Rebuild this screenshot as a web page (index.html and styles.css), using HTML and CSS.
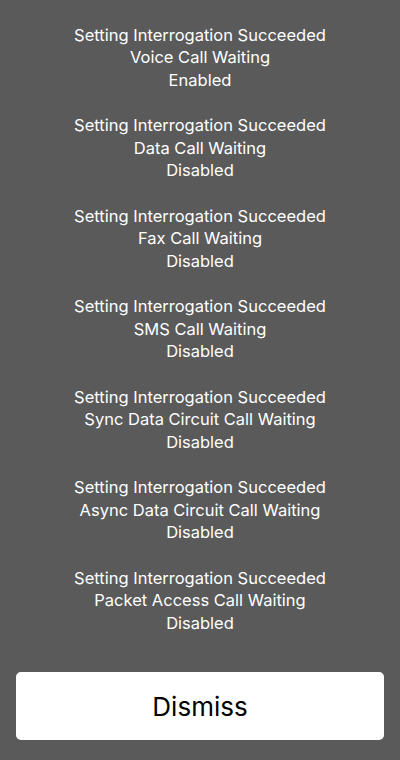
FILE: index.html
```html
<!DOCTYPE html>
<html lang="en">
<head>
    <meta charset="UTF-8">
    <meta name="viewport" content="width=device-width, initial-scale=1.0">
    <title>Call Waiting</title>
    <link rel="stylesheet" href="styles.css">
</head>
<body>
    <div class="screen">
        <div class="results">
            <p class="result">Setting Interrogation Succeeded<br>Voice Call Waiting<br>Enabled</p>
            <p class="result">Setting Interrogation Succeeded<br>Data Call Waiting<br>Disabled</p>
            <p class="result">Setting Interrogation Succeeded<br>Fax Call Waiting<br>Disabled</p>
            <p class="result">Setting Interrogation Succeeded<br>SMS Call Waiting<br>Disabled</p>
            <p class="result">Setting Interrogation Succeeded<br>Sync Data Circuit Call Waiting<br>Disabled</p>
            <p class="result">Setting Interrogation Succeeded<br>Async Data Circuit Call Waiting<br>Disabled</p>
            <p class="result">Setting Interrogation Succeeded<br>Packet Access Call Waiting<br>Disabled</p>
        </div>
        <button class="dismiss">Dismiss</button>
    </div>
</body>
</html>
```

FILE: styles.css
```css
/* General Styles */
html, body {
    margin: 0;
    padding: 0;
    background-color: #5a5a5a;
}

body {
    font-family: Inter, Roboto, "Liberation Sans", sans-serif;
}

.screen {
    width: 400px;
    height: 760px;
    display: flex;
    flex-direction: column;
    box-sizing: border-box;
    padding: 23.5px 16px 20px;
}

.results {
    display: flex;
    flex-direction: column;
    gap: 23px;
    flex: 1;
}

.result {
    margin: 0;
    color: #fff;
    font-size: 16.5px;
    line-height: 22.5px;
    text-align: center;
}

.dismiss {
    height: 68px;
    border: none;
    border-radius: 5px;
    background-color: #fff;
    color: #000;
    font-family: inherit;
    font-size: 26px;
    cursor: pointer;
}
```
